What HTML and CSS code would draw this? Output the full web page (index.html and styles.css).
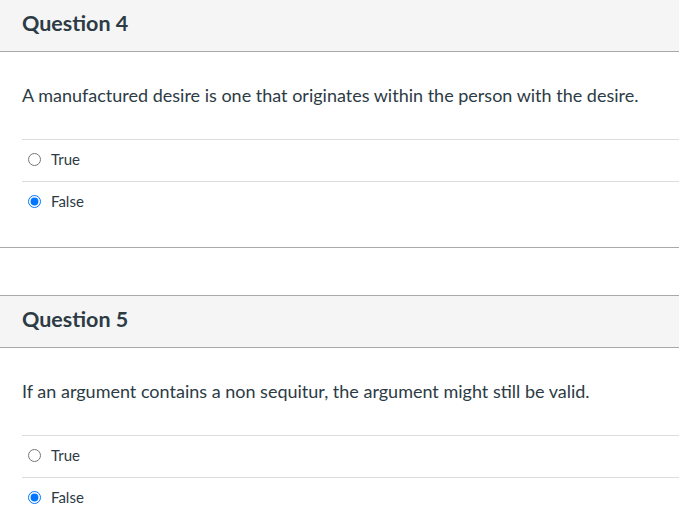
FILE: index.html
```html
<!DOCTYPE html>
<html lang="en">
<head>
<meta charset="utf-8">
<title>Quiz</title>
<link rel="stylesheet" href="styles.css">
</head>
<body>
<div class="quiz">
  <div class="question first">
    <div class="q-header"><h2 class="q-title">Question 4</h2></div>
    <div class="q-body">
      <p class="q-text">A manufactured desire is one that originates within the person with the desire.</p>
      <div class="answers">
        <label class="answer"><input type="radio" name="q4" class="radio"><span>True</span></label>
        <label class="answer"><input type="radio" name="q4" class="radio" checked><span>False</span></label>
      </div>
    </div>
  </div>
  <div class="question">
    <div class="q-header"><h2 class="q-title">Question 5</h2></div>
    <div class="q-body">
      <p class="q-text">If an argument contains a non sequitur, the argument might still be valid.</p>
      <div class="answers">
        <label class="answer"><input type="radio" name="q5" class="radio"><span>True</span></label>
        <label class="answer"><input type="radio" name="q5" class="radio" checked><span>False</span></label>
      </div>
    </div>
  </div>
</div>
</body>
</html>
```
FILE: styles.css
```css
html, body {
  margin: 0;
  padding: 0;
  background: #ffffff;
}
body {
  font-family: Lato, "Open Sans", sans-serif;
  color: #2d3b45;
}
.quiz {
  display: flex;
  flex-direction: column;
  gap: 47px;
  margin-top: -1px;
}
.question {
  border-top: 1px solid #a9a9a9;
  border-bottom: 1px solid #a9a9a9;
}
.q-header {
  box-sizing: border-box;
  height: 52px;
  background: #f5f5f5;
  border-bottom: 1px solid #a9a9a9;
  padding: 10px 22px 0;
}
.q-title {
  margin: 0;
  font-size: 21.5px;
  line-height: 26px;
  font-weight: 700;
  color: #2d3b45;
}
.q-body {
  padding: 30px 0 24px 22px;
}
.q-text {
  margin: 0;
  font-size: 18px;
  line-height: 26px;
}
.answers {
  margin-top: 31px;
}
.answer {
  display: flex;
  align-items: center;
  height: 41px;
  border-top: 1px solid #dddddd;
  padding-left: 6px;
  font-size: 15px;
  line-height: 18px;
}
.answer span {
  margin-top: -3px;
}
.radio {
  width: 13px;
  height: 13px;
  margin: -2px 10px 0 0;
}
```
